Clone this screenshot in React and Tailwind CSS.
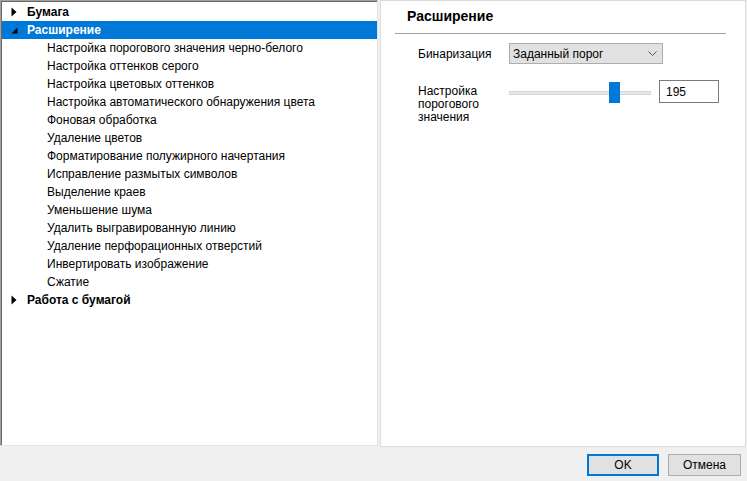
import React from "react";

const F = { fontFamily: '"Liberation Sans", Arial, sans-serif' };

const items = [
  "Настройка порогового значения черно-белого",
  "Настройка оттенков серого",
  "Настройка цветовых оттенков",
  "Настройка автоматического обнаружения цвета",
  "Фоновая обработка",
  "Удаление цветов",
  "Форматирование полужирного начертания",
  "Исправление размытых символов",
  "Выделение краев",
  "Уменьшение шума",
  "Удалить выгравированную линию",
  "Удаление перфорационных отверстий",
  "Инвертировать изображение",
  "Сжатие",
];

function Collapsed() {
  return (
    <svg width="6" height="10" viewBox="0 0 6 10" className="shrink-0">
      <path d="M0.5 0.5 L5.5 5 L0.5 9.5 Z" fill="#000" />
    </svg>
  );
}

function ExpandedDark() {
  return (
    <svg width="7" height="7" viewBox="0 0 7 7" className="shrink-0">
      <path d="M6.5 0.5 L6.5 6.5 L0.5 6.5 Z" fill="#000" />
    </svg>
  );
}

export default function App() {
  return (
    <div
      className="w-[747px] h-[481px] bg-[#f0f0f0] flex flex-col text-[12px] text-black overflow-hidden"
      style={F}
    >
      <div className="flex h-[447px]">
        {/* Tree */}
        <div className="w-[378px] h-[446px] border-l border-t border-[#a0a0a0] border-r-[#e3e3e3] border-b-[#e3e3e3] border-r border-b">
          <div className="w-full h-full border-l border-t border-[#696969] bg-white pt-[1px]">
            <div className="flex items-center h-[18px]">
              <div className="w-[25px] flex justify-end pr-[10px]">
                <Collapsed />
              </div>
              <span className="font-bold">Бумага</span>
            </div>
            <div className="flex items-center h-[18px] bg-[#0078d7] text-white">
              <div className="w-[25px] flex justify-end pr-[9px] pt-[1px]">
                <ExpandedDark />
              </div>
              <span className="font-bold">Расширение</span>
            </div>
            {items.map((t) => (
              <div key={t} className="flex items-center h-[18px] pl-[45px]">
                {t}
              </div>
            ))}
            <div className="flex items-center h-[18px]">
              <div className="w-[25px] flex justify-end pr-[10px]">
                <Collapsed />
              </div>
              <span className="font-bold">Работа с бумагой</span>
            </div>
          </div>
        </div>
        {/* Right panel */}
        <div className="ml-[2px] w-[366px] h-[447px] border border-[#dcdcdc] bg-white flex flex-col">
          <div className="pl-[26px] pt-[5px] h-[32px] text-[14px] font-bold leading-[20px]">
            Расширение
          </div>
          <div className="ml-[14px] w-[331px] h-[1px] bg-[#a0a0a0]" />
          <div className="flex items-center mt-[9px] pl-[37px]">
            <div className="w-[91px]">Бинаризация</div>
            <div className="w-[154px] h-[21px] bg-[#e1e1e1] border border-[#adadad] flex items-center justify-between pl-[3px] pr-[5px]">
              <span>Заданный порог</span>
              <svg width="9" height="6" viewBox="0 0 9 6">
                <path d="M0.5 0.5 L4.5 4.5 L8.5 0.5" fill="none" stroke="#555" strokeWidth="1" />
              </svg>
            </div>
          </div>
          <div className="flex mt-[16px] pl-[37px]">
            <div className="w-[91px] h-[45px] overflow-hidden leading-[13px] pt-[5px] pr-[20px]">
              Настройка порогового значения черно-белого
            </div>
            <div className="relative w-[142px] h-[23px] mt-[1px]">
              <div className="absolute left-0 right-0 top-[10px] h-[4px] bg-[#e7e7e7] border border-[#d6d6d6]" />
              <div className="absolute left-[100px] top-[1px] w-[11px] h-[21px] bg-[#0078d7]" />
            </div>
            <div className="ml-[8px] w-[60px] h-[23px] border border-[#7a7a7a] flex items-center pl-[6px]">
              195
            </div>
          </div>
        </div>
      </div>
      <div className="flex justify-end pr-[6px] pt-[7px] gap-[9px]">
        <div className="w-[72px] h-[22px] border-2 border-[#0078d7] bg-[#e1e1e1] flex items-center justify-center">
          OK
        </div>
        <div className="w-[73px] h-[22px] border border-[#adadad] bg-[#e1e1e1] flex items-center justify-center">
          Отмена
        </div>
      </div>
    </div>
  );
}
